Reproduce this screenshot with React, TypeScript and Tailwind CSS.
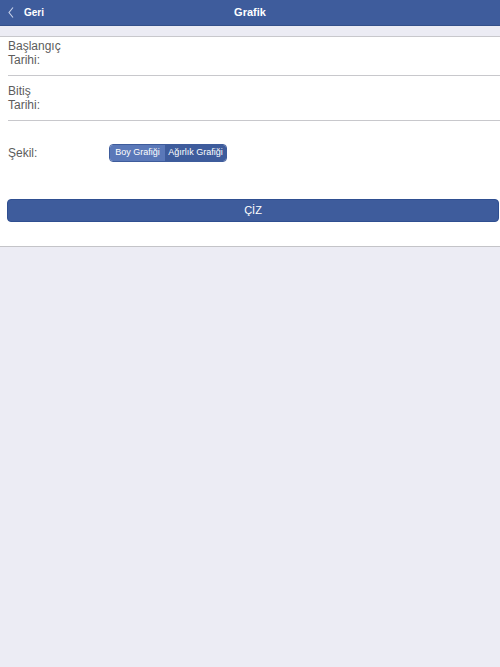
import React from "react";

export default function App() {
  const font = { fontFamily: '"Liberation Sans", Arial, sans-serif' };
  return (
    <div className="w-[500px] min-h-[667px] bg-[#ececf4] flex flex-col" style={font}>
      <div className="h-[26px] bg-[#3e5c9c] border-b border-[#34508a] flex items-center relative">
        <div className="flex items-center pl-[8px]">
          <svg width="6" height="11" viewBox="0 0 6 11" className="mr-[10px]">
            <path d="M5 0.5 L1 5.5 L5 10.5" stroke="#c9d3ea" strokeWidth="1.1" fill="none" />
          </svg>
          <span className="text-[10px] font-bold text-white">Geri</span>
        </div>
        <div className="absolute inset-0 flex items-center justify-center text-[11px] font-bold text-white">
          Grafik
        </div>
      </div>
      <div className="h-[11px] bg-[#ececf4] border-b border-[#c8c8cc]"></div>
      <div className="bg-white border-b border-[#c4c4c8] flex flex-col">
        <div className="ml-[8px] pt-[2px] pb-[8px] border-b border-[#c8c8cc] text-[12px] leading-[14px] text-[#5c5c5c]">
          <div>Başlangıç</div>
          <div>Tarihi:</div>
        </div>
        <div className="ml-[8px] pt-[8px] pb-[8px] border-b border-[#c8c8cc] text-[12px] leading-[14px] text-[#5c5c5c]">
          <div>Bitiş</div>
          <div>Tarihi:</div>
        </div>
        <div className="ml-[8px] pt-[23px] flex items-center">
          <div className="w-[101px] text-[12px] text-[#5c5c5c]">Şekil:</div>
          <div className="flex h-[18px] rounded-[4px] overflow-hidden border border-[#3e5c9c] text-[9px] text-white">
            <div className="w-[55px] bg-[#5a78b8] flex items-center justify-center">Boy Grafiği</div>
            <div className="w-[61px] bg-[#3e5c9c] flex items-center justify-center">Ağırlık Grafiği</div>
          </div>
        </div>
        <div className="ml-[7px] mr-[1px] mt-[37px] mb-[24px] h-[23px] bg-[#3e5c9c] rounded-[4px] border border-[#2f4f91] flex items-center justify-center text-[11px] text-white">
          ÇİZ
        </div>
      </div>
      <div className="flex-1 bg-[#ececf4]"></div>
    </div>
  );
}
